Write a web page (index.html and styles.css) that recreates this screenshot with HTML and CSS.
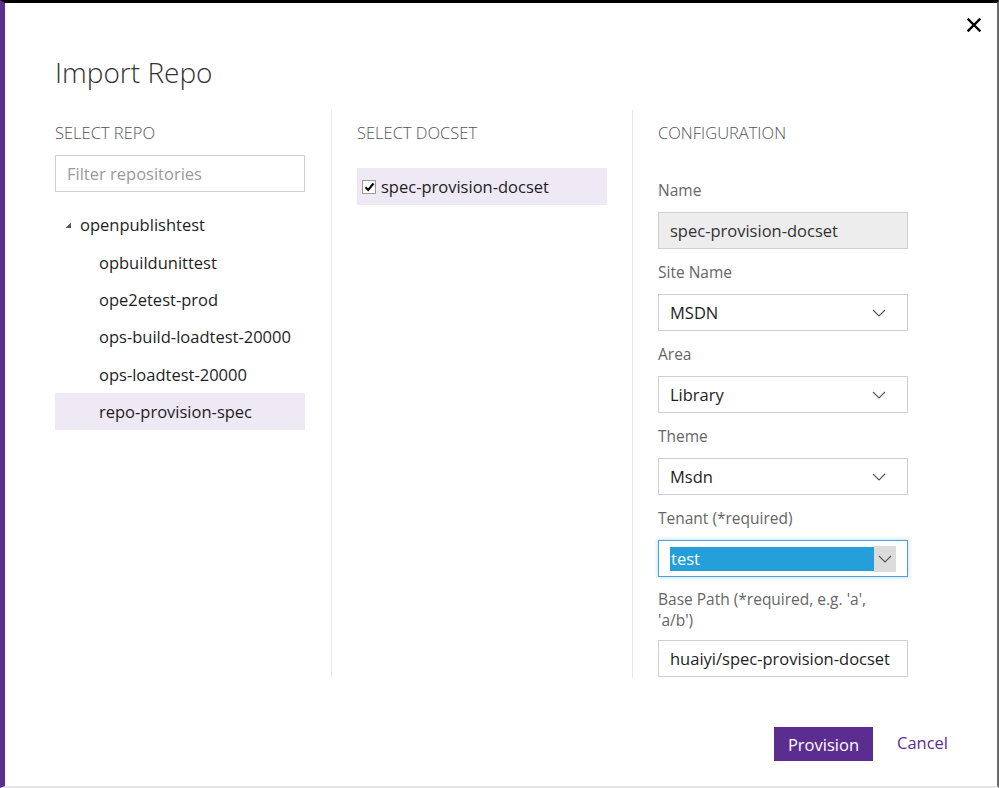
FILE: index.html
```html
<!DOCTYPE html>
<html>
<head>
<meta charset="utf-8">
<title>Import Repo</title>
<link rel="stylesheet" href="styles.css">
</head>
<body>
<div class="frame">
  <button class="close" aria-label="Close">
    <svg width="14" height="14" viewBox="0 0 14 14"><path d="M1.5 1.5 L12.5 12.5 M12.5 1.5 L1.5 12.5" stroke="#000" stroke-width="2.4" stroke-linecap="square"/></svg>
  </button>
  <h1 class="title">Import Repo</h1>
  <div class="columns">
    <section class="col col-repo">
      <h2 class="heading">SELECT REPO</h2>
      <div class="input filter">Filter repositories</div>
      <ul class="tree">
        <li class="row root"><svg class="tri" width="7" height="7" viewBox="0 0 7 7"><polygon points="6,0.5 6,6 0.5,6" fill="#555"/></svg>openpublishtest</li>
        <li class="row child">opbuildunittest</li>
        <li class="row child">ope2etest-prod</li>
        <li class="row child">ops-build-loadtest-20000</li>
        <li class="row child">ops-loadtest-20000</li>
        <li class="row child selected">repo-provision-spec</li>
      </ul>
    </section>
    <section class="col col-docset">
      <h2 class="heading">SELECT DOCSET</h2>
      <div class="docset selected">
        <span class="check"><svg width="11" height="10" viewBox="0 0 11 10"><path d="M1.5 5.2 L4.2 8 L9.5 1.5" fill="none" stroke="#000" stroke-width="2"/></svg></span>
        spec-provision-docset
      </div>
    </section>
    <section class="col col-config">
      <h2 class="heading">CONFIGURATION</h2>
      <div class="field">
        <label class="label">Name</label>
        <div class="input disabled">spec-provision-docset</div>
      </div>
      <div class="field">
        <label class="label">Site Name</label>
        <div class="input select">MSDN<svg class="chev" width="14" height="8" viewBox="0 0 14 8"><path d="M1 1 L7 7 L13 1" fill="none" stroke="#555" stroke-width="1.1"/></svg></div>
      </div>
      <div class="field">
        <label class="label">Area</label>
        <div class="input select">Library<svg class="chev" width="14" height="8" viewBox="0 0 14 8"><path d="M1 1 L7 7 L13 1" fill="none" stroke="#555" stroke-width="1.1"/></svg></div>
      </div>
      <div class="field">
        <label class="label">Theme</label>
        <div class="input select">Msdn<svg class="chev" width="14" height="8" viewBox="0 0 14 8"><path d="M1 1 L7 7 L13 1" fill="none" stroke="#555" stroke-width="1.1"/></svg></div>
      </div>
      <div class="field">
        <label class="label">Tenant (*required)</label>
        <div class="input select focused"><span class="hl">test</span><span class="chevbox"><svg width="14" height="8" viewBox="0 0 14 8"><path d="M1 1 L7 7 L13 1" fill="none" stroke="#555" stroke-width="1.1"/></svg></span></div>
      </div>
      <div class="field">
        <label class="label two">Base Path (*required, e.g. 'a',<br>'a/b')</label>
        <div class="input">huaiyi/spec-provision-docset</div>
      </div>
    </section>
  </div>
  <div class="footer">
    <button class="btn primary">Provision</button>
    <button class="btn link">Cancel</button>
  </div>
</div>
</body>
</html>
```
FILE: styles.css
```css
* { box-sizing: border-box; }
html, body { margin: 0; padding: 0; background: #000; }
body {
  width: 999px;
  height: 788px;
  overflow: hidden;
  font-family: "Open Sans", "Noto Sans", sans-serif;
  color: #1e1e1e;
}
.frame {
  position: relative;
  width: 999px;
  height: 788px;
  margin: 0;
  background: #fff;
  border-top: 3px solid #000;
  border-left: 5px solid #5c2d91;
  border-right: 2px solid #6b6b6b;
  border-bottom: 2px solid #e6e6e6;
  padding-left: 50px;
}
.close {
  position: absolute;
  top: 12px;
  right: 13px;
  width: 20px;
  height: 20px;
  padding: 0;
  border: 0;
  background: transparent;
  display: flex;
  align-items: center;
  justify-content: center;
}
.title {
  margin: 0;
  padding-top: 51px;
  font-weight: 300;
  font-size: 28px;
  line-height: 36px;
  color: #333;
}
.columns {
  display: flex;
  margin-top: 20px;
  height: 568px;
}
.col {
  width: 250px;
  box-sizing: content-box;
}
.col-repo { padding-right: 26px; border-right: 1px solid #e8e8e8; }
.col-docset { padding: 0 25px; border-right: 1px solid #e8e8e8; }
.col-config { padding-left: 25px; }
.heading {
  margin: 12px 0 0;
  font-size: 16.5px;
  font-weight: 300;
  line-height: 22px;
  color: #555;
}
.input {
  height: 37px;
  border: 1px solid #cfcfcf;
  background: #fff;
  padding: 0 11px;
  display: flex;
  align-items: center;
  font-size: 16.5px;
  color: #1e1e1e;
  position: relative;
}
.filter {
  margin-top: 11px;
  color: #9a9a9a;
}
.tree {
  list-style: none;
  margin: 14px 0 0;
  padding: 0;
}
.row {
  height: 37.4px;
  display: flex;
  align-items: center;
  font-size: 16.5px;
  color: #1e1e1e;
}
.root { padding-left: 10px; }
.tri { margin-right: 8px; margin-top: 1px; }
.child { padding-left: 44px; }
.selected { background: #efe9f6; }
.docset {
  margin-top: 24px;
  height: 37px;
  display: flex;
  align-items: center;
  padding-left: 5px;
  font-size: 16.5px;
  color: #1e1e1e;
}
.check {
  width: 14px;
  height: 14px;
  border: 1px solid #9a9a9a;
  background: #fff;
  display: inline-flex;
  align-items: center;
  justify-content: center;
  margin-right: 5px;
}
.col-config .heading + .field .label { margin-top: 35px; }
.label {
  display: block;
  margin: 12px 0 11px;
  font-size: 15.5px;
  line-height: 22px;
  color: #666;
  font-weight: 400;
}
.label.two { line-height: 20.5px; margin-bottom: 10px; }
.disabled { background: #ededed; color: #333; }
.select { justify-content: space-between; }
.chev { margin-right: 10px; }
.focused {
  border-color: #4aa3df;
  box-shadow: 0 0 4px rgba(74,163,223,0.45);
  padding: 0 11px 0 11px;
}
.hl {
  flex: 1;
  height: 24px;
  line-height: 24px;
  background: #249fda;
  color: #fff;
  padding-left: 1px;
}
.chevbox {
  width: 22px;
  height: 26px;
  background: #dcdcdc;
  display: flex;
  align-items: center;
  justify-content: center;
}
.footer {
  display: flex;
  justify-content: flex-end;
  align-items: center;
  margin-top: 49px;
  padding-right: 49px;
  gap: 24px;
}
.btn {
  font-family: inherit;
  font-size: 16.5px;
  border: 0;
  cursor: pointer;
}
.primary {
  width: 99px;
  height: 34px;
  background: #5c2d91;
  color: #fff;
  padding: 0;
}
.link {
  background: transparent;
  color: #5c2d91;
  padding: 0;
  margin-top: -4px;
}
```
